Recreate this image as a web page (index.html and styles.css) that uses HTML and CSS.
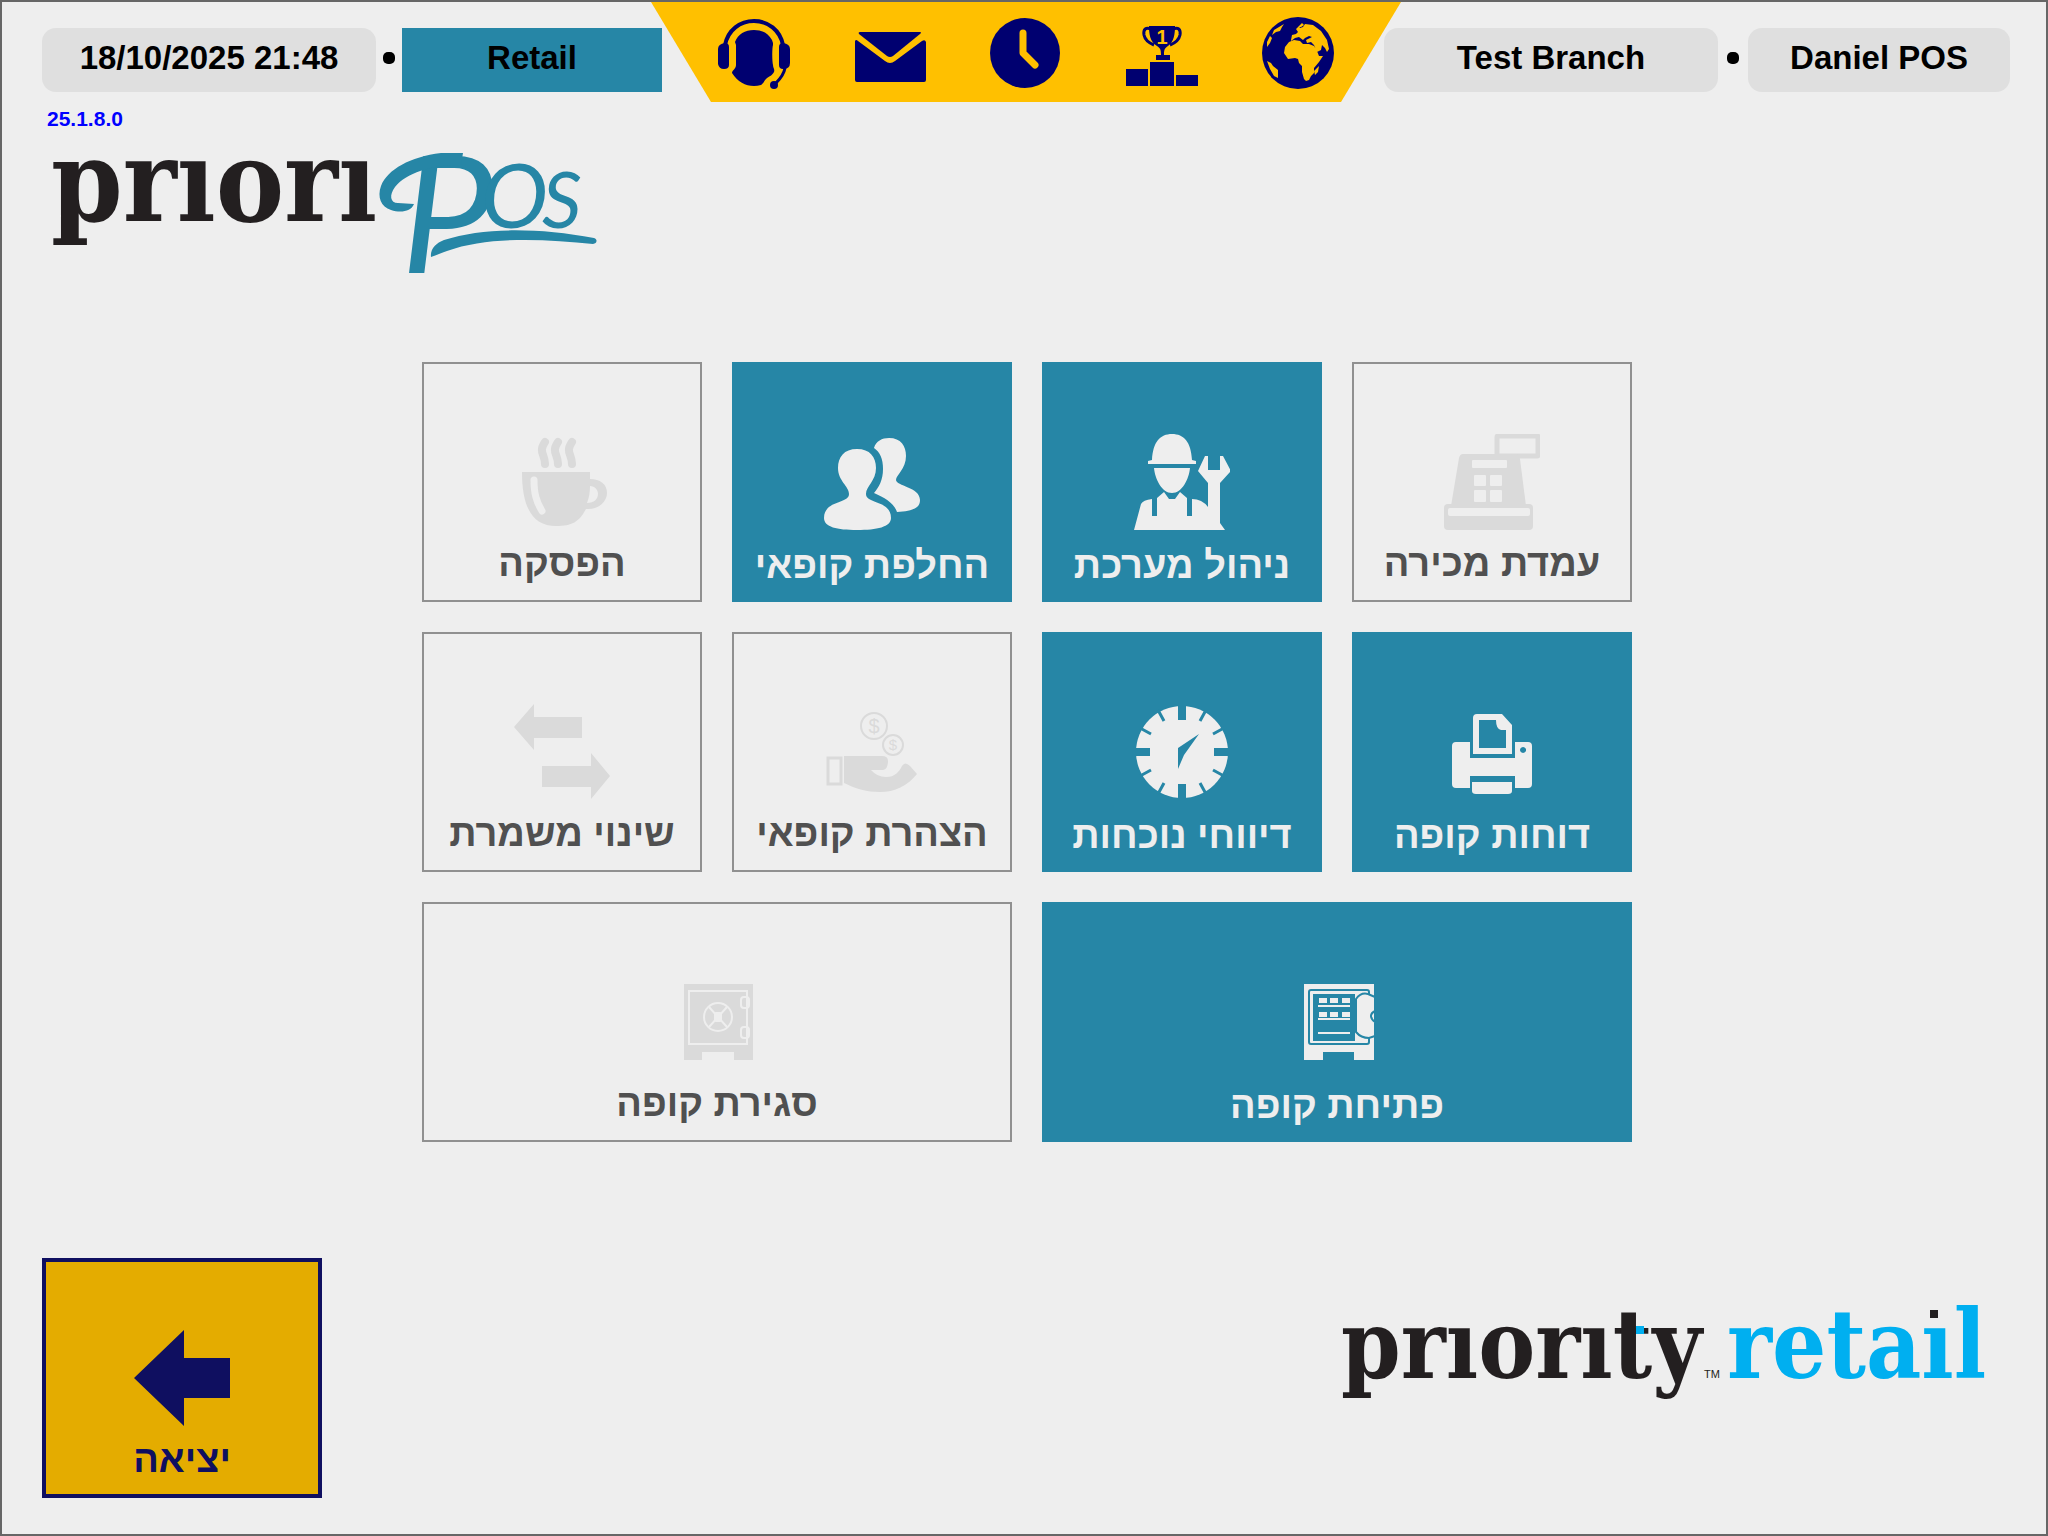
FILE: index.html
```html
<!DOCTYPE html>
<html lang="he">
<head>
<meta charset="utf-8">
<meta name="viewport" content="width=device-width, initial-scale=1">
<title>PrioriPOS</title>
<link rel="stylesheet" href="styles.css">
</head>
<body>
<div class="page">
  <header class="topbar">
    <div class="topbar-group">
      <span class="pill pill-wide">18/10/2025 21:48</span>
      <span class="dot"></span>
      <span class="pill pill-mode">Retail</span>
    </div>
    <div class="topbar-group topbar-group-end">
      <span class="pill pill-wide">Test Branch</span>
      <span class="dot"></span>
      <span class="pill">Daniel POS</span>
    </div>
    <nav class="banner">
      <button class="banner-btn" type="button" aria-label="Support">
        <svg viewBox="0 0 72 72"><path d="M7 27C10 12 22 3 36 3s26 9 29 24" fill="none" stroke="currentColor" stroke-width="4"/><path d="M7 25q4 0 4 4v18q0 4-5 4t-6-5V31q0-5 7-6zM65 25q-4 0-4 4v18q0 4 4 4 7 0 7-6V31q0-5-7-6z" fill="currentColor"/><path d="M36 12c8 0 14 3 18 10l1 3v2c-1 3-1 16 0 20 0 3 2 4 1 7-2 4-5 4-8 7-2 2-2 4-5 6-11 3-22-1-29-12 0-3 4-4 4-8V27l-1-3c3-8 10-12 19-12z" fill="currentColor"/><path d="M67 50c-1 6-4 10-9 15" fill="none" stroke="currentColor" stroke-width="3"/><circle cx="56" cy="67" r="4" fill="currentColor"/></svg>
      </button>
      <button class="banner-btn" type="button" aria-label="Messages">
        <svg viewBox="0 0 72 72" fill="currentColor"><path d="M6 14h60q2 0 0 2L39 38q-3 2-6 0L5 16q-1-2 1-2z"/><path d="M1 23q1-2 3 0l27 20q5 4 10 0l27-20q3-2 4 1v38q0 2-2 2H3q-2 0-2-2z"/></svg>
      </button>
      <button class="banner-btn" type="button" aria-label="Clock">
        <svg viewBox="0 0 72 72"><circle cx="35" cy="35" r="35" fill="currentColor"/><path d="M33 15v20l12 12" class="cut-line" stroke-width="7" stroke-linecap="round" stroke-linejoin="round"/></svg>
      </button>
      <button class="banner-btn" type="button" aria-label="Leaderboard">
        <svg viewBox="0 0 72 72" fill="currentColor"><path d="M0 51h22v17H0zM24 44h24v24H24zM50 57h22v11H50z"/><path d="M23 8h26c0 8-1 16-7 20-3 2-4 3-4 9h6v5H30v-5h5c0-6-1-7-4-9-7-4-8-12-8-20z"/><path d="M25 11c-5-2-8 0-7 6 1 5 5 8 10 10M47 11c5-2 8 0 7 6-1 5-5 8-10 10" fill="none" stroke="currentColor" stroke-width="3"/><text x="36" y="26" class="medal-num">1</text></svg>
      </button>
      <button class="banner-btn" type="button" aria-label="Language">
        <svg viewBox="0 0 72 72"><circle cx="36" cy="35" r="36" fill="currentColor"/><path class="cut" d="M27 24l5-2 6 1 3 3 6 0 5 2 3 5 2 5 4 0-4 6-5 6 0 5-3 3-2 4-3 1-2-2-2-7 0-6-3-3-1-4-3-1-7 1-4-6 1-6zM29 22l1-5 4-1 2-2-2-3 3-3 1 2 3-1 2-3 8 1 8 6 6 9 2 9-2 3-2-4-3-3-1 5-4 2-3-7-3-3-4 1-1-3 6-3-3-1-4 2-2 2-4-3-4 1-4 3zM36 9l4-4 2 2-3 2zM5 43l4 2 2 3 5 4 0 8-4-2-4-7zM12 12l10-6-2 3-2 4-4 1-4 3zM8 18l2 2-2 5-3 4 0-5zM57 48l-1 6-3 3-1-4 3-3z"/></svg>
      </button>
    </nav>
  </header>

  <section class="brand">
    <p class="version">25.1.8.0</p>
    <svg class="brand-logo" viewBox="0 0 560 140" role="img" aria-label="prioriPOS">
      <text x="9" y="77" class="word word-lg">prıorı</text>
      <g class="teal">
        <text x="359" y="129" class="script script-p">P</text>
        <text x="439" y="84" class="script script-o">O</text>
        <text x="500" y="84" class="script script-s">S</text>
      </g>
      <path class="teal" d="M372 60c-3 8-14 9-23 6-10-3-14-13-10-24 7-17 29-29 60-33l22 0-2 12c-30 0-55 8-66 22-6 8-5 16 3 16z"/>
      <path class="teal" d="M389 113c-1-8 5-14 13-17 40-13 95-12 150-2 4 1 3 6-1 6-48-5-105-8-146 7-6 2-10 4-16 6z"/>
    </svg>
  </section>

  <main class="tiles" dir="rtl">
    <button class="tile" type="button" disabled>
      <svg class="tile-icon" viewBox="0 0 96 96"><rect x="53" y="2" width="41" height="20" rx="1" fill="none" stroke="currentColor" stroke-width="5"/><path fill="currentColor" d="M19 20h52q4 0 5 5l6 47H7l8-48q1-4 4-4z"/><rect y="70" width="89" height="26" rx="4" fill="currentColor"/><g class="cut"><rect x="28" y="26" width="35" height="8" rx="1"/><rect x="30" y="41" width="12" height="11" rx="1"/><rect x="46" y="41" width="12" height="11" rx="1"/><rect x="30" y="56" width="12" height="12" rx="1"/><rect x="46" y="56" width="12" height="12" rx="1"/><rect x="4" y="74" width="82" height="8" rx="2"/></g></svg>
      <span class="tile-label">עמדת מכירה</span>
    </button>
    <button class="tile" type="button">
      <svg class="tile-icon" viewBox="0 0 96 96" fill="currentColor"><path d="M18 26C19 8 26 0 38 0s19 8 20 26l4 1v3H14v-3zM20 34h36c-1 11-8 25-18 25S21 45 20 34z"/><path d="M0 96l7-26q2-4 11-5v17h5V64l7-6 5 7h6l5-7 7 6v18h5V65q10 0 16 8V49l-10-12 7-15h3v14h12V22h3l8 15-11 12v40l5 7z"/></svg>
      <span class="tile-label">ניהול מערכת</span>
    </button>
    <button class="tile" type="button">
      <svg class="tile-icon" viewBox="0 0 96 96" fill="currentColor"><path d="M33 15c13 0 19 8 19 19 0 13-10 18-10 26 0 10 25 6 25 24 0 9-14 12-34 12S0 93 0 84c0-18 25-14 25-24 0-8-11-13-11-26 0-11 6-19 19-19z"/><path d="M50 14C52 7 58 4 65 4c12 0 17 8 17 18 0 13-10 19-10 24 0 6 24 7 24 20 0 9-9 11-23 12-3-9-12-14-23-19 5-6 9-13 9-24 0-10-3-17-9-21z"/></svg>
      <span class="tile-label">החלפת קופאי</span>
    </button>
    <button class="tile" type="button" disabled>
      <svg class="tile-icon" viewBox="0 0 96 96"><path fill="currentColor" fill-rule="evenodd" d="M8 38h68v7c10 0 17 5 17 14s-9 17-21 16c-7 13-14 17-30 17C20 92 8 76 8 38zM76 52c0 6-1 12-3 17 7 0 11-4 11-9 0-4-3-8-8-8z"/><path d="M31 8c-7 10 0 12 0 22M44 8c-7 10 0 12 0 22M58 8c-7 10 0 12 0 22" fill="none" stroke="currentColor" stroke-width="8" stroke-linecap="round"/><path d="M20 46c0 13 2 21 8 31" class="cut-line" stroke-width="7" stroke-linecap="round"/></svg>
      <span class="tile-label">הפסקה</span>
    </button>

    <button class="tile" type="button">
      <svg class="tile-icon" viewBox="0 0 96 96"><path fill="currentColor" fill-rule="evenodd" d="M12 38h14v16h45V38h13q4 0 4 4v38q0 4-4 4H71V72H26v12H12q-4 0-4-4V42q0-4 4-4zM79 43a3 3 0 1 0 .1 0z"/><path fill="currentColor" fill-rule="evenodd" d="M33 10h25l10 11v29H29V14q0-4 4-4zM35 16v28h27V26h-5q-5-1-5-10z"/><path fill="currentColor" d="M28 78h40v9q0 3-4 3H32q-4 0-4-3z"/></svg>
      <span class="tile-label">דוחות קופה</span>
    </button>
    <button class="tile" type="button">
      <svg class="tile-icon" viewBox="0 0 96 96"><circle cx="48" cy="48" r="46" fill="currentColor"/><path class="cut-line" stroke-width="8" d="M48 0v16M48 80v16M0 48h16M80 48h16"/><path class="cut-line" stroke-width="3" d="M24 6l6 11M72 6l-6 11M24 90l6-11M72 90l-6-11M6 24l11 6M90 24l-11 6M6 72l11-6M90 72l-11-6"/><path class="cut" d="M65 30L44 44v21l6-14z"/></svg>
      <span class="tile-label">דיווחי נוכחות</span>
    </button>
    <button class="tile" type="button" disabled>
      <svg class="tile-icon" viewBox="0 0 96 96"><g fill="none" stroke="currentColor" stroke-width="2"><circle cx="50" cy="22" r="13"/><circle cx="69" cy="41" r="10"/><path stroke-width="3" d="M4 54h13v26H4z"/></g><path fill="currentColor" d="M20 52h38q6 0 6 5 0 8-5 9H47q6 7 15 7c9 0 13-5 16-11q3-5 8 0l7 8c-10 12-22 18-37 18-13 0-24-3-36-9z"/><text x="50" y="29" class="coin coin-lg">$</text><text x="69" y="46" class="coin">$</text></svg>
      <span class="tile-label">הצהרת קופאי</span>
    </button>
    <button class="tile" type="button" disabled>
      <svg class="tile-icon" viewBox="0 0 96 96" fill="currentColor"><path d="M0 23L20 0v13h48v21H20v12zM96 72L77 49v13H28v21h49v12z"/></svg>
      <span class="tile-label">שינוי משמרת</span>
    </button>

    <button class="tile tile-wide" type="button">
      <svg class="tile-icon" viewBox="0 0 96 96"><path fill="currentColor" d="M15 10h70v76H65v-8H34v8H15z"/><rect x="20" y="16" width="60" height="54" rx="2" class="cut-line" stroke-width="2"/><path class="cut" d="M24 20h42v47H24z"/><path d="M24 68h54" stroke="currentColor" stroke-width="2"/><path fill="currentColor" d="M30 24h8v5h-8zM41 24h8v5h-8zM53 24h8v5h-8zM29 31h32v2H29zM30 38h8v5h-8zM41 38h8v5h-8zM53 38h8v5h-8zM29 44h32v2H29zM29 58h32v2H29z"/><path fill="currentColor" class="door" stroke-width="2" d="M67 25q5-7 12-5l7 3v14q-4 2-4 5t4 6v14l-6 2q-8 0-13-6z"/></svg>
      <span class="tile-label">פתיחת קופה</span>
    </button>
    <button class="tile tile-wide" type="button" disabled>
      <svg class="tile-icon" viewBox="0 0 96 96"><path fill="currentColor" d="M15 10h69v76H65v-8H33v8H15z"/><g class="cut-line" stroke-width="2"><rect x="20" y="17" width="58" height="53"/><circle cx="49" cy="43" r="14"/><path d="M40 33l18 20M58 33L40 53"/><rect x="72" y="23" width="8" height="11" rx="3"/><rect x="72" y="53" width="8" height="11" rx="3"/></g><rect class="cut" x="45" y="38" width="8" height="10" rx="2"/></svg>
      <span class="tile-label">סגירת קופה</span>
    </button>
  </main>

  <footer class="bottom">
    <button class="tile tile-exit" type="button" dir="rtl">
      <svg class="tile-icon" viewBox="0 0 96 96" fill="currentColor"><path d="M0 48L50 0v28h46v40H50v28z"/></svg>
      <span class="tile-label">יציאה</span>
    </button>
    <svg class="footer-logo" viewBox="0 0 650 120" role="img" aria-label="priority retail">
      <text x="1" y="86" class="word word-md">prıorıty</text>
      <text x="364" y="86" class="tm">TM</text>
      <text x="387" y="86" class="word word-md sky">retaıl</text>
      <rect x="296" y="34" width="8" height="8" class="sky"/>
      <rect x="590" y="18" width="8" height="8" class="ink"/>
    </svg>
  </footer>
</div>
</body>
</html>
```
FILE: styles.css
```css
:root {
  --paper: #eeeeee;
  --teal: #2686a6;
  --amber: #ffc000;
  --navy: #000070;
  --frame: #666666;
  --ink: #231f20;
  --sky: #00aff0;
}

* { box-sizing: border-box; }

body {
  margin: 0;
  background: var(--paper);
  font-family: "Liberation Sans", Arial, sans-serif;
}

button {
  margin: 0;
  border: 0;
  font: inherit;
}

.page {
  display: flex;
  flex-direction: column;
  min-height: 100vh;
  padding: 0 36px 36px 40px;
  border: 2px solid var(--frame);
}

/* Top bar */
.topbar {
  position: relative;
  display: flex;
  justify-content: space-between;
  padding-top: 26px;
}

.topbar-group {
  display: flex;
  align-items: center;
  gap: 7px;
}

.topbar-group-end { gap: 9px; }

.pill {
  width: 262px;
  height: 64px;
  border-radius: 14px;
  background: #dfdfdf;
  color: #000;
  font-size: 33px;
  font-weight: bold;
  line-height: 60px;
  text-align: center;
}

.pill-wide { width: 334px; }

.pill-mode {
  width: 260px;
  border-radius: 0;
  background: var(--teal);
}

.dot {
  width: 12px;
  height: 12px;
  margin-bottom: 4px;
  border-radius: 5px;
  background: #000;
}

.banner {
  --cut: var(--amber);
  position: absolute;
  top: 0;
  left: 50%;
  display: flex;
  justify-content: center;
  gap: 64px;
  width: 750px;
  height: 100px;
  padding-top: 16px;
  transform: translateX(-50%);
  background: var(--amber);
  clip-path: polygon(0 0, 100% 0, 690px 100%, 60px 100%);
}

.banner-btn {
  width: 72px;
  height: 72px;
  padding: 0;
  background: none;
  color: var(--navy);
}

.banner-btn svg {
  display: block;
  width: 72px;
  height: 72px;
  overflow: visible;
}

.medal-num {
  fill: var(--cut);
  font-size: 20px;
  font-weight: bold;
  text-anchor: middle;
}

.cut { fill: var(--cut); }
.cut-line { fill: none; stroke: var(--cut); }
.door { stroke: var(--cut); }

/* Product logo */
.version {
  margin: 15px 0 0 5px;
  color: #0000ff;
  font-size: 21px;
  font-weight: bold;
  line-height: 24px;
}

.brand-logo {
  display: block;
  width: 560px;
  height: 140px;
  margin-top: 13px;
  overflow: visible;
}

.word {
  fill: var(--ink);
  font-family: "DejaVu Serif Condensed", "DejaVu Serif", serif;
  font-weight: bold;
}

.word-lg { font-size: 114px; }
.word-md { font-size: 95px; }

.script {
  font-family: Lato, sans-serif;
  font-style: italic;
}

.script-p { font-size: 164px; }
.script-o { font-size: 90px; }
.script-s { font-size: 78px; }

.teal { fill: var(--teal); }
.ink { fill: var(--ink); }
.sky { fill: var(--sky); }

/* Menu tiles */
.tiles {
  display: grid;
  grid-template-columns: repeat(4, 280px);
  gap: 30px;
  justify-content: center;
  margin-top: 78px;
  padding-left: 2px;
}

.tile {
  --cut: var(--teal);
  display: flex;
  flex-direction: column;
  align-items: center;
  gap: 14px;
  height: 240px;
  padding: 72px 0 0;
  background: var(--teal);
  color: var(--paper);
}

.tile-wide { grid-column: span 2; }

.tile:disabled {
  --cut: var(--paper);
  gap: 12px;
  padding-top: 70px;
  border: 2px solid #909090;
  background: var(--paper);
}

.tile:disabled .tile-icon { color: #dadada; }
.tile:disabled .tile-label { color: #505050; }

.tile-icon {
  flex: none;
  width: 96px;
  height: 96px;
}

.tile-label {
  font-size: 38px;
  font-weight: bold;
  line-height: 42px;
  white-space: nowrap;
}

.coin {
  fill: currentColor;
  font-size: 15px;
  text-anchor: middle;
}

.coin-lg { font-size: 20px; }

/* Footer */
.bottom {
  display: flex;
  justify-content: space-between;
  margin-top: auto;
}

.tile-exit {
  width: 280px;
  gap: 12px;
  padding-top: 68px;
  border: 4px solid #0f0f60;
  background: #e4ac00;
  color: #0f0f60;
}

.footer-logo {
  width: 650px;
  height: 120px;
  margin: 34px 20px 0 0;
  overflow: visible;
}

.tm {
  fill: var(--ink);
  font-size: 11px;
}

.word.sky { fill: var(--sky); }
```
